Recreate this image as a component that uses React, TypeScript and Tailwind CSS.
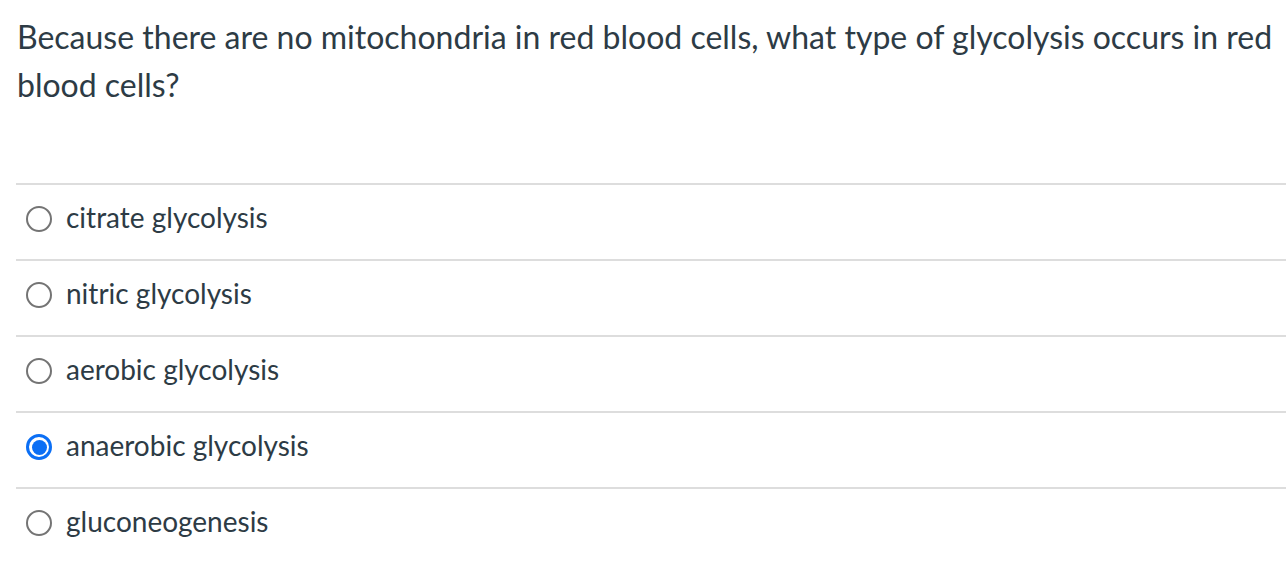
import React from "react";

const options = [
  { label: "citrate glycolysis", checked: false },
  { label: "nitric glycolysis", checked: false },
  { label: "aerobic glycolysis", checked: false },
  { label: "anaerobic glycolysis", checked: true },
  { label: "gluconeogenesis", checked: false },
];

export default function App() {
  return (
    <div className="w-[1287px] h-[572px] bg-white text-[#2d3b45] overflow-hidden" style={{ fontFamily: "Lato, 'Noto Sans', sans-serif" }}>
      <div className="pl-[16px] pr-[1px]">
        <p className="text-[32px] leading-[48px] pt-[13px] pl-[1px]">
          Because there are no mitochondria in red blood cells, what type of glycolysis occurs in red blood cells?
        </p>
        <div className="mt-[74px] border-t-2 border-[#dddddd]">
          {options.map((o) => (
            <div key={o.label} className="h-[76px] border-b-2 border-[#dddddd] flex items-start last:border-b-0">
              <div className="ml-[10px] mt-[21px]">
                {o.checked ? (
                  <span className="w-[26px] h-[26px] rounded-full border-[3px] border-[#0b6ff5] flex items-center justify-center">
                    <span className="w-[15px] h-[15px] rounded-full bg-[#0b6ff5]" />
                  </span>
                ) : (
                  <span className="block w-[26px] h-[26px] rounded-full border-2 border-[#747474]" />
                )}
              </div>
              <span className="text-[28px] leading-[34px] mt-[15px] ml-[14px]">{o.label}</span>
            </div>
          ))}
        </div>
      </div>
    </div>
  );
}
